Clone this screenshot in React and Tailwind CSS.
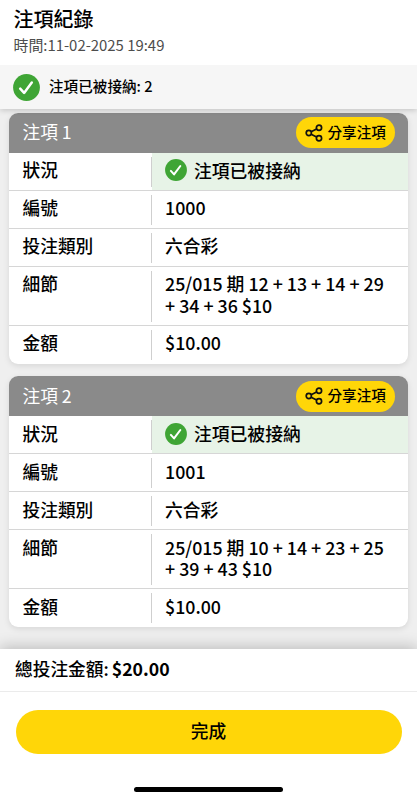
const BETS = [
  { id: "1000", title: "注項 1", details: "25/015 期 12 + 13 + 14 + 29 + 34 + 36 $10" },
  { id: "1001", title: "注項 2", details: "25/015 期 10 + 14 + 23 + 25 + 39 + 43 $10" },
];

function CheckIcon({ className }) {
  return (
    <svg viewBox="0 0 27 27" fill="none" className={className} aria-hidden="true">
      <circle cx="13.5" cy="13.5" r="13.4" fill="#3fa535" />
      <path
        d="M7.2 14.6 11.1 18.9 18.8 8.6"
        stroke="#fff"
        strokeWidth="2.5"
        strokeLinecap="round"
        strokeLinejoin="round"
      />
    </svg>
  );
}

function ShareIcon() {
  return (
    <svg
      viewBox="0 0 18 18"
      fill="none"
      stroke="#111"
      strokeWidth="1.7"
      className="size-[18px] shrink-0"
      aria-hidden="true"
    >
      <circle cx="3.8" cy="9" r="2.6" />
      <circle cx="14" cy="3.8" r="2.6" />
      <circle cx="14" cy="14.2" r="2.6" />
      <path d="M6.1 7.7 11.6 5M6.1 10.3 11.6 13" />
    </svg>
  );
}

function Row({ label, accepted, tall, last, children }) {
  return (
    <div
      className={`flex ${tall ? "h-[59px]" : "h-[38px]"} ${last ? "" : "border-b border-[#d6d6d6]"}`}
    >
      <dt className="w-[142px] shrink-0 pt-[6.9px] pl-[13.5px]">{label}</dt>
      <div className={`w-px shrink-0 bg-[#cfcfcf] ${last ? "my-1" : "mt-1 mb-[3px]"}`} />
      <dd
        className={`flex-1 pt-[6.9px] pr-4 pl-[13px] text-[17.8px] ${accepted ? "bg-[#e7f3e7]" : ""}`}
      >
        {children}
      </dd>
    </div>
  );
}

function BetCard({ bet }) {
  return (
    <article className="overflow-hidden rounded-[9px] bg-white shadow-[0_2px_6px_rgba(0,0,0,0.1)]">
      <div className="flex h-10 items-center justify-between bg-[#8a8a8a] pr-[13px] pl-[13.5px]">
        <h2 className="pb-[3px] text-[17.7px] leading-[22px] font-normal text-white">{bet.title}</h2>
        <button
          type="button"
          className="flex h-[31px] w-[99px] items-center gap-[4.5px] rounded-full bg-[#ffd608] pl-[9px] text-[14.6px] leading-none font-medium whitespace-nowrap"
        >
          <ShareIcon />
          <span className="pb-px">分享注項</span>
        </button>
      </div>

      <dl className="text-[17.7px] leading-[21.5px] font-medium">
        <Row label="狀況" accepted>
          <span className="flex items-center gap-[7px]">
            <CheckIcon className="size-[22px] shrink-0" />
            注項已被接納
          </span>
        </Row>
        <Row label="編號">{bet.id}</Row>
        <Row label="投注類別">六合彩</Row>
        <Row label="細節" tall>
          {bet.details}
        </Row>
        <Row label="金額" last>
          $10.00
        </Row>
      </dl>
    </article>
  );
}

export default function App() {
  return (
    <div className="flex h-[800px] w-full flex-col overflow-hidden bg-white font-['Noto_Sans_CJK_TC',sans-serif] text-black">
      <header className="z-20 h-[65px] shrink-0 bg-white pt-[6px] pl-[13.5px]">
        <h1 className="text-[20px] leading-[26px] font-medium">注項紀錄</h1>
        <p className="mt-[3px] text-[14.9px] leading-[20px] text-[#4d4d4d]">
          時間:11-02-2025 19:49
        </p>
      </header>

      <div className="z-10 flex h-11 shrink-0 items-center gap-[9px] bg-[#f6f6f6] pl-[13px] text-[14.6px] leading-none font-medium shadow-[0_1px_6px_rgba(0,0,0,0.2)]">
        <CheckIcon className="size-[27px]" />
        <span className="pb-px">注項已被接納: 2</span>
      </div>

      <main className="flex h-[540px] shrink-0 flex-col gap-[12.5px] bg-[#efefef] px-[9px] pt-[3.5px]">
        {BETS.map((bet) => (
          <BetCard key={bet.id} bet={bet} />
        ))}
      </main>

      <footer className="z-10 flex flex-1 flex-col bg-white shadow-[0_-2px_14px_rgba(0,0,0,0.22)]">
        <p className="flex h-[43px] shrink-0 items-center border-b border-[#ebebeb] pb-[2px] pl-[15px] text-[17.7px] leading-none font-medium">
          總投注金額:<b className="ml-[3px] font-bold">$20.00</b>
        </p>
        <button
          type="button"
          className="mx-[15.5px] mt-[17.5px] h-[44.5px] shrink-0 rounded-full bg-[#ffd608] pb-[2px] text-[17.7px] leading-none font-medium"
        >
          完成
        </button>
        <div className="mx-auto mt-[33px] h-[5px] w-[149px] shrink-0 rounded-full bg-black" />
      </footer>
    </div>
  );
}
